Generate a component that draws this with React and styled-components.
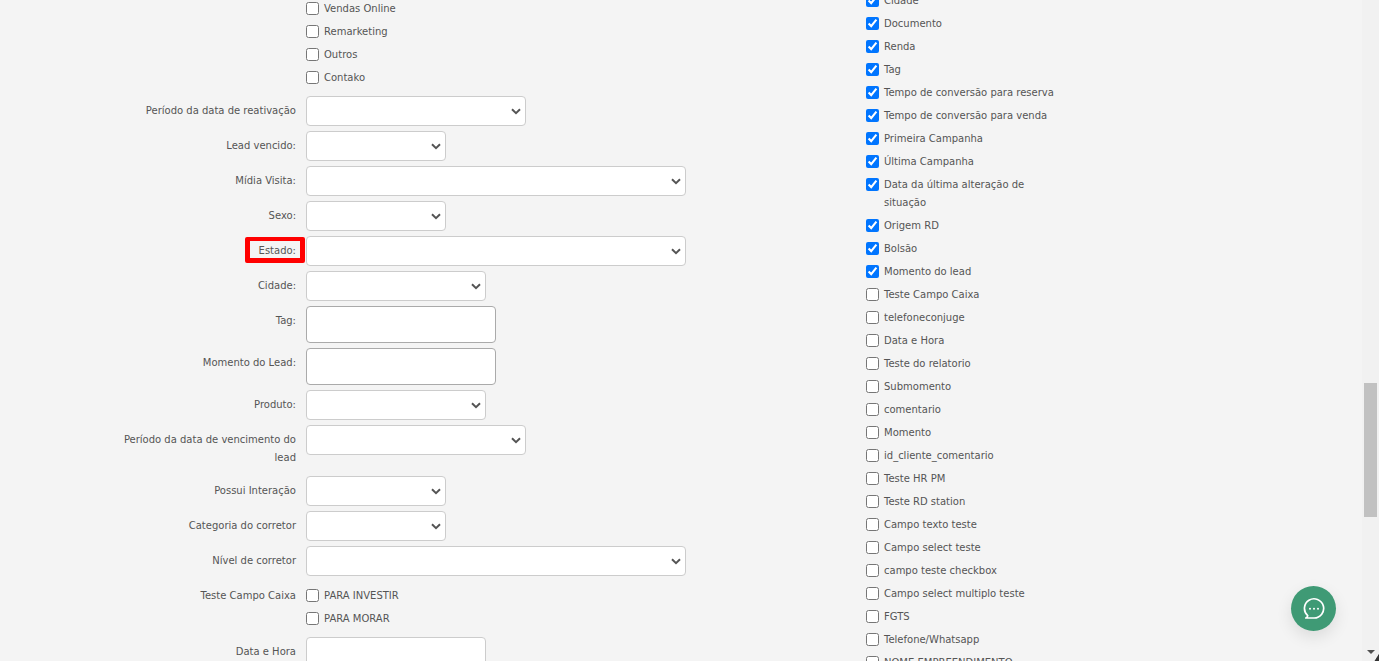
import React from 'react';
import styled, { createGlobalStyle } from 'styled-components';

const chevron = `url("data:image/svg+xml,%3Csvg xmlns='http://www.w3.org/2000/svg' width='10' height='7' viewBox='0 0 10 7'%3E%3Cpath d='M1 1.2l4 4 4-4' fill='none' stroke='%23555' stroke-width='2'/%3E%3C/svg%3E")`;

const GlobalStyle = createGlobalStyle`
  html, body {
    margin: 0;
    height: 100%;
    overflow: hidden;
    background: #f4f4f4;
  }
  body {
    font-family: "DejaVu Sans", Verdana, sans-serif;
    font-size: 10px;
    line-height: 18px;
    color: #555;
  }
`;

const Page = styled.div`
  display: flex;
  height: 661px;
  overflow: hidden;
`;

const Main = styled.main`
  flex: 1;
  display: flex;
  padding-left: 116px;
  overflow: hidden;
`;

const FormColumn = styled.section`
  width: 750px;
  flex: none;
  margin-top: -3px;
`;

const ColumnsColumn = styled.section`
  width: 200px;
  flex: none;
  margin-top: -11px;
`;

const FormRow = styled.div`
  display: flex;
  gap: 10px;
  margin-bottom: 5px;
`;

const Label = styled.label`
  position: relative;
  width: 180px;
  flex: none;
  padding: 6px 0 4px;
  text-align: right;
`;

const Highlight = styled.span`
  position: absolute;
  top: 1px;
  right: -9px;
  width: 60px;
  height: 26px;
  box-sizing: border-box;
  border: solid #f00;
  border-width: 4px 5px 5px;
  border-radius: 2px;
`;

const Select = styled.select`
  display: block;
  width: ${p => p.$w}px;
  height: 30px;
  box-sizing: border-box;
  border: 1px solid #ccc;
  border-radius: 4px;
  background: #fff ${chevron} no-repeat right 4px center;
  appearance: none;
`;

const TextBox = styled.textarea`
  display: block;
  width: 190px;
  height: 37px;
  box-sizing: border-box;
  border: 1px solid #aaa;
  border-radius: 4px;
  background: #fff;
  resize: none;
`;

const TextInput = styled.input`
  display: block;
  width: 180px;
  height: 30px;
  box-sizing: border-box;
  border: 1px solid #ccc;
  border-radius: 4px;
  background: #fff;
`;

const CheckGroup = styled.div`
  padding: ${p => (p.$flush ? '0 0 2px' : '3px 0 2px')};
`;

const CheckRow = styled.label`
  display: flex;
  align-items: flex-start;
  gap: 5px;
  padding: 3px 0 2px;
  input {
    width: 13px;
    height: 13px;
    margin: 2px 0 0;
    flex: none;
  }
`;

const CheckText = styled.span`
  max-width: 180px;
`;

const ScrollTrack = styled.aside`
  position: relative;
  width: 17px;
  flex: none;
  background: #f1f1f1;
  padding: 383px 2px 0;
  box-sizing: border-box;

  &::after {
    content: '';
    position: absolute;
    right: 0;
    bottom: 0;
    width: 5px;
    height: 8px;
    background: linear-gradient(to bottom right, transparent 50%, #333 60%);
  }
`;

const ScrollThumb = styled.div`
  height: 134px;
  background: #c1c1c1;
`;

const ScrollArrow = styled.span`
  position: absolute;
  left: 5px;
  bottom: 7px;
  border-left: 4px solid transparent;
  border-right: 4px solid transparent;
  border-top: 4px solid #505050;
`;

const ChatButton = styled.button`
  position: fixed;
  left: 1291px;
  top: 586px;
  width: 45px;
  height: 45px;
  padding: 0;
  border: 0;
  border-radius: 50%;
  background: #3f9a75;
  box-shadow: 0 6px 16px rgba(0, 0, 0, 0.1);
  display: flex;
  align-items: center;
  justify-content: center;
`;

const topChecks = ['Vendas Online', 'Remarketing', 'Outros', 'Contako'];

const checkedColumns = [
  'Cidade', 'Documento', 'Renda', 'Tag', 'Tempo de conversão para reserva',
  'Tempo de conversão para venda', 'Primeira Campanha', 'Última Campanha',
  'Data da última alteração de situação', 'Origem RD', 'Bolsão', 'Momento do lead',
];

const otherColumns = [
  'Teste Campo Caixa', 'telefoneconjuge', 'Data e Hora', 'Teste do relatorio',
  'Submomento', 'comentario', 'Momento', 'id_cliente_comentario', 'Teste HR PM',
  'Teste RD station', 'Campo texto teste', 'Campo select teste', 'campo teste checkbox',
  'Campo select multiplo teste', 'FGTS', 'Telefone/Whatsapp', 'NOME EMPREENDIMENTO',
];

const Check = ({ text, checked }) => (
  <CheckRow>
    <input type="checkbox" defaultChecked={checked} />
    <CheckText>{text}</CheckText>
  </CheckRow>
);

const Field = ({ label, children, marked }) => (
  <FormRow>
    <Label>
      {label}
      {marked && <Highlight />}
    </Label>
    {children}
  </FormRow>
);

const ChatIcon = () => (
  <svg width="24" height="24" viewBox="0 0 24 24" fill="none">
    <path d="M3.8 21c1.3-.4 2-1.2 1.9-2.4A9.6 9.6 0 1 1 12 21H3.8z" stroke="#fff" strokeWidth="1.7" strokeLinejoin="round" />
    <circle cx="8" cy="11.8" r="1" fill="#fff" />
    <circle cx="12" cy="11.8" r="1" fill="#fff" />
    <circle cx="16" cy="11.8" r="1" fill="#fff" />
  </svg>
);

export default function App() {
  return (
    <Page>
      <GlobalStyle />
      <Main>
        <FormColumn>
          <FormRow>
            <Label />
            <CheckGroup $flush>
              {topChecks.map(t => <Check key={t} text={t} />)}
            </CheckGroup>
          </FormRow>
          <Field label="Período da data de reativação"><Select $w={220} /></Field>
          <Field label="Lead vencido:"><Select $w={140} /></Field>
          <Field label="Mídia Visita:"><Select $w={380} /></Field>
          <Field label="Sexo:"><Select $w={140} /></Field>
          <Field label="Estado:" marked><Select $w={380} /></Field>
          <Field label="Cidade:"><Select $w={180} /></Field>
          <Field label="Tag:"><TextBox /></Field>
          <Field label="Momento do Lead:"><TextBox /></Field>
          <Field label="Produto:"><Select $w={180} /></Field>
          <Field label="Período da data de vencimento do lead"><Select $w={220} /></Field>
          <Field label="Possui Interação"><Select $w={140} /></Field>
          <Field label="Categoria do corretor"><Select $w={140} /></Field>
          <Field label="Nível de corretor"><Select $w={380} /></Field>
          <Field label="Teste Campo Caixa">
            <CheckGroup>
              <Check text="PARA INVESTIR" />
              <Check text="PARA MORAR" />
            </CheckGroup>
          </Field>
          <Field label="Data e Hora"><TextInput /></Field>
        </FormColumn>
        <ColumnsColumn>
          {checkedColumns.map(t => <Check key={t} text={t} checked />)}
          {otherColumns.map(t => <Check key={t} text={t} />)}
        </ColumnsColumn>
      </Main>
      <ScrollTrack>
        <ScrollThumb />
        <ScrollArrow />
      </ScrollTrack>
      <ChatButton aria-label="Chat"><ChatIcon /></ChatButton>
    </Page>
  );
}
